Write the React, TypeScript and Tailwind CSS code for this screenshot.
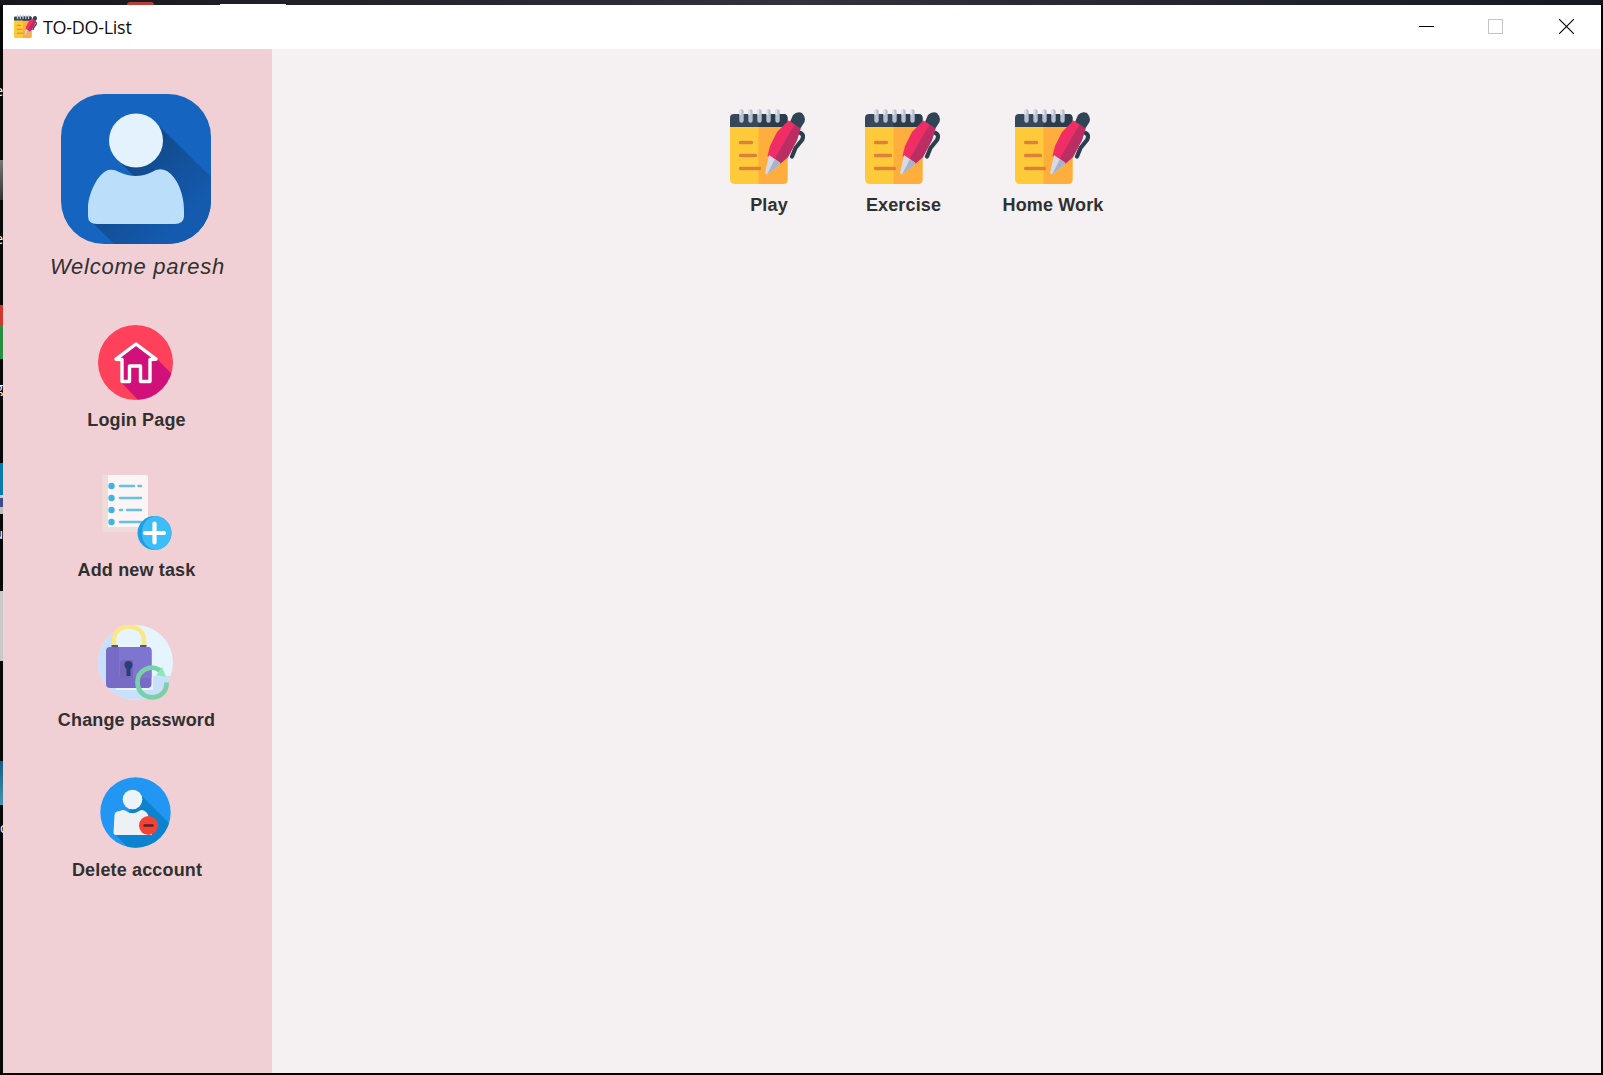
import React from "react";

function NotebookIcon({ className }: { className: string }) {
  return (
    <svg className={className} viewBox="0 0 75 75">
      <path d="M0 17H57.500V71Q57.500 75 53 75H5Q0 75 0 70Z" fill="#ffca3a" />
      <path d="M28.500 17H57.500V70Q57.500 75 52 75H28.500Z" fill="#ffad3d" />
      <path d="M0 18V9Q0 5 4 5H53Q57.500 5 57.500 9V18Z" fill="#35495a" />
      <path d="M28.500 5H53Q57.500 5 57.500 9V18H28.500Z" fill="#2b3c4b" />
      <g stroke="#b9c0d3" strokeWidth="4.400" strokeLinecap="round">
        <path d="M11.500 2.500V11.500M20.500 2.500V11.500M29.500 2.500V11.500M38.500 2.500V11.500M47.500 2.500V11.500" />
      </g>
      <g stroke="#e3e4ec" strokeWidth="2" strokeLinecap="round">
        <path d="M10.300 1.500V5M19.300 1.500V5M28.300 1.500V5M37.300 1.500V5M46.300 1.500V5" />
      </g>
      <g stroke="#d98238" strokeWidth="3.400" strokeLinecap="round">
        <path d="M10.500 33.500H21.500M10.500 46.500H25.500M10.500 59.500H29.500" />
      </g>
      <path d="M69 23.500Q75 25 72 31L65.500 39L62 47.500" fill="none" stroke="#2b3e4e" strokeWidth="4.200" strokeLinecap="round" strokeLinejoin="round" />
      <path d="M60 13L63 6Q67 2 72 4Q76 8 74.500 13L70 20Z" fill="#2f4455" />
      <path d="M58.500 11.500L70.500 19.500L67 31L58 48L50 55L37.500 47L40 37L47 23Z" fill="#f02e65" />
      <path d="M64.500 15.500L70.500 19.500L67 31L58 48L50 55L44 51Z" fill="#bb2e63" />
      <path d="M39 46L50.500 54L47 58L37 65.500L35 64Z" fill="#d7dae4" />
      <path d="M45 50L50.500 54L47 58L37 65.500Z" fill="#a9b2c9" />
    </svg>
  );
}

function AvatarIcon() {
  return (
    <svg className="size-[150px]" viewBox="0 0 150 150">
      <defs>
        <clipPath id="avatar-clip"><rect width="150" height="150" rx="43" /></clipPath>
        <linearGradient id="avatar-shade" gradientUnits="userSpaceOnUse" x1="75" y1="60" x2="135" y2="120">
          <stop offset="0" stopColor="#124a8b" />
          <stop offset="1" stopColor="#145bb0" />
        </linearGradient>
      </defs>
      <g clipPath="url(#avatar-clip)">
        <rect width="150" height="150" fill="#1565c0" />
        <path d="M96 30L150 83V150H53L31 128L90 100L55 64Z" fill="url(#avatar-shade)" />
        <path d="M47 76Q53 75 58 78Q75 86 91 78Q98 73 106 77C117 84 123 101 123 116V123Q122 130 114 130H36Q27 130 27 122V114C27 101 36 80 47 76Z" fill="#bbdefb" />
        <circle cx="75" cy="46.500" r="27" fill="#e3f2fd" />
      </g>
    </svg>
  );
}

function HomeIcon() {
  return (
    <svg className="mr-px size-[75px]" viewBox="0 0 75 75">
      <defs><clipPath id="home-clip"><circle cx="37.500" cy="37.500" r="37.500" /></clipPath></defs>
      <g clipPath="url(#home-clip)">
        <rect width="75" height="75" fill="#ff415b" />
        <path d="M38 19L57 32L82 57V75H40L23 57L23 36L18 35Z" fill="#d1107a" />
      </g>
      <path d="M38 19L18 34.200L24 34.500V56.500H31.500V41H42.500V56.500H52V34.500L58 34.200Z" fill="none" stroke="#fff" strokeWidth="3.400" strokeLinejoin="round" />
    </svg>
  );
}

function AddTaskIcon() {
  return (
    <svg className="mr-px size-[75px]" viewBox="0 0 75 75">
      <path d="M4 0H49V57H6Q4 57 4 55Z" fill="#efdcd9" />
      <path d="M10 0H48Q50 0 50 2V52H10Z" fill="#fbf5f5" />
      <g fill="#3fb6e2">
        <circle cx="13.500" cy="11" r="3.200" />
        <circle cx="13.500" cy="23" r="3.200" />
        <circle cx="13.500" cy="35" r="3.200" />
        <circle cx="13.500" cy="47" r="3.200" />
      </g>
      <path d="M22 11H36M40.500 11H43M22 23H43M22 35H24M29 35H43M22 47H43" stroke="#68c0e5" strokeWidth="2.600" strokeLinecap="round" />
      <circle cx="56.500" cy="58" r="17" fill="#1b9fe6" />
      <path d="M56.500 41A17 17 0 0 1 56.500 75Q44 71 44 58Q44 45 56.500 41Z" fill="#3dbdf8" />
      <path d="M56.500 48.500V67.500M47 58H66" stroke="#fff" strokeWidth="4.200" strokeLinecap="round" />
    </svg>
  );
}

function PasswordIcon() {
  return (
    <svg className="mr-px size-[75px]" viewBox="0 0 75 75">
      <defs><clipPath id="lock-clip"><circle cx="37.500" cy="37.500" r="37.500" /></clipPath></defs>
      <g clipPath="url(#lock-clip)">
        <rect width="75" height="75" fill="#e5f4fd" />
        <path d="M0 8L18 5V65H55V51H75V75H0Z" fill="#c9e0fa" />
      </g>
      <path d="M16 22V15C16 -3 46 -3 46 15V22" fill="none" stroke="#fae788" strokeWidth="4.400" />
      <path d="M13.500 20H20V25H13.500ZM42 20H48.500V25H42Z" fill="#545582" />
      <rect x="8" y="22" width="45.500" height="41" rx="4" fill="#776bc5" />
      <path d="M21 22H50Q53.500 22 53.500 26V53H25Q21 53 21 49Z" fill="#7e75d1" />
      <path d="M22 39Q22 35 26 35H35V53H25Q22 53 22 50Z" fill="#7767b9" />
      <circle cx="30.500" cy="40" r="4" fill="#293d76" />
      <path d="M28.500 40H32.500V51H28.500Z" fill="#293d76" />
      <path d="M62 45.500C52 38.500 39.500 46 39.500 57C39.500 67 47 72.500 55 72.300C63 72 69 66 68.500 57.500" fill="none" stroke="#79d1a9" strokeWidth="4.800" />
      <path d="M64 42L68 51.500L58 50.500Z" fill="#8de9b3" />
    </svg>
  );
}

function DeleteIcon() {
  return (
    <svg className="mr-px size-[75px]" viewBox="0 0 75 75">
      <defs><clipPath id="delete-clip"><circle cx="37.500" cy="37.500" r="35.200" /></clipPath></defs>
      <g clipPath="url(#delete-clip)">
        <rect width="75" height="75" fill="#2196f3" />
        <path d="M41 18L75 52V75H32L18 60Z" fill="#0d83cf" />
      </g>
      <path d="M22 36Q25 34 28 36Q34.500 40.500 41 36Q45 33.500 49 38L54 48V60H18Q15.500 60 15.500 58L16.500 40Q17 36 22 36Z" fill="#edf1f4" />
      <circle cx="34.500" cy="24.500" r="9.800" fill="#edf3f8" />
      <circle cx="50.500" cy="50.500" r="9.500" fill="#f44336" />
      <path d="M46.500 50.500H54.500" stroke="#5b2028" strokeWidth="2.400" strokeLinecap="round" />
    </svg>
  );
}

const actions = [
  { label: "Login Page", icon: <HomeIcon />, shift: "pl-px" },
  { label: "Add new task", icon: <AddTaskIcon />, shift: "pl-px" },
  { label: "Change password", icon: <PasswordIcon />, shift: "pl-px" },
  { label: "Delete account", icon: <DeleteIcon />, shift: "pl-[2px]" },
];

const tasks = [
  { label: "Play", box: "ml-[730px]", shift: "pl-[3px]" },
  { label: "Exercise", box: "ml-[60px]", shift: "pl-[2px]" },
  { label: "Home Work", box: "ml-[75px]", shift: "pl-px" },
];

function DesktopEdge() {
  const letter = "h-4 overflow-hidden text-right text-[14px] leading-4 text-white";
  return (
    <div className="flex w-[3px] shrink-0 flex-col overflow-hidden bg-[#080808] font-['Open_Sans',sans-serif] [&>*]:shrink-0">
      <div className="h-[78px]" />
      <div className={letter}><span className="float-right">e</span></div>
      <div className="h-[61px]" />
      <div className="h-10 bg-gradient-to-b from-[#777] to-[#333]" />
      <div className="h-[31px]" />
      <div className={letter}><span className="float-right">e</span></div>
      <div className="h-[58px]" />
      <div className="h-5 bg-[#cf382d]" />
      <div className="h-[34px] bg-[#298f40]" />
      <div className="h-[21px]" />
      <div className={letter}><span className="float-right">g</span></div>
      <div className="h-[67px]" />
      <div className="h-8 bg-[#087aae]" />
      <div className="h-[3px] bg-[#c9c9cc]" />
      <div className="h-[9px] bg-[#3e4b89]" />
      <div className="h-[7px] bg-[#bdbdbd]" />
      <div className="h-3" />
      <div className={letter}><span className="float-right">u</span></div>
      <div className="h-[49px]" />
      <div className="h-[70px] bg-[#c9c9c9]" />
      <div className="h-[100px]" />
      <div className="h-[44px] bg-gradient-to-b from-[#155c80] to-[#4795b0]" />
      <div className="h-[15px]" />
      <div className={letter}><span className="float-left">o</span></div>
    </div>
  );
}

export default function App() {
  return (
    <div className="flex h-[1075px] w-[1603px] flex-col overflow-hidden bg-[#020203] font-['Liberation_Sans',Arial,sans-serif] text-[#303030]">
      <div className="flex h-[5px] shrink-0 items-end bg-gradient-to-r from-[#17171c] via-[#34323c] to-[#15191f]">
        <div className="ml-[127px] h-[3px] w-[27px] rounded-t-full bg-[#b83e37]" />
        <div className="ml-[66px] h-px w-[66px] bg-white" />
      </div>
      <div className="flex h-[1068px]">
        <DesktopEdge />
        <div className="flex w-[1598px] flex-col">
          <header className="flex h-11 shrink-0 items-center bg-white">
            <NotebookIcon className="mb-px ml-[11px] size-[23px]" />
            <span className="ml-[6px] w-[200px] font-['Open_Sans',sans-serif] text-[18px] leading-6 tracking-[-0.3px] text-[#111]">TO-DO-List</span>
            <div className="ml-auto flex items-center pr-[27px] pb-px">
              <svg className="mr-[54px] size-[15px]" viewBox="0 0 15 15"><path d="M0 7.500H15" stroke="#000" /></svg>
              <svg className="mr-14 size-[15px]" viewBox="0 0 15 15"><rect x=".5" y=".5" width="14" height="14" fill="none" stroke="#c4c4c4" /></svg>
              <svg className="size-[15px]" viewBox="0 0 15 15"><path d="M0 0L15 15M15 0L0 15" stroke="#000" strokeWidth="1.100" /></svg>
            </div>
          </header>
          <div className="flex flex-1">
            <aside className="flex w-[269px] flex-col items-center bg-[#f1d0d5] pt-[45px] pr-[3px]">
              <AvatarIcon />
              <p className="mt-[9px] h-7 pl-[3px] text-[22px] leading-7 tracking-[0.75px] whitespace-nowrap italic">Welcome paresh</p>
              <nav className="mt-11 flex w-[156px] flex-col">
                {actions.map((a) => (
                  <div key={a.label} className="flex h-[150px] flex-col items-center">
                    {a.icon}
                    <span className={`mt-2 text-[18px] leading-6 font-bold tracking-[0.15px] whitespace-nowrap ${a.shift}`}>{a.label}</span>
                  </div>
                ))}
              </nav>
            </aside>
            <main className="flex flex-1 items-start bg-[#f5f0f1] pt-[60px]">
              <div className="-ml-[272px] flex">
                {tasks.map((t) => (
                  <div key={t.label} className={`flex w-[75px] flex-col items-center ${t.box}`}>
                    <NotebookIcon className="size-[75px]" />
                    <span className={`mt-[9px] text-[18px] leading-6 font-bold tracking-[0.15px] whitespace-nowrap ${t.shift}`}>{t.label}</span>
                  </div>
                ))}
              </div>
            </main>
          </div>
        </div>
      </div>
    </div>
  );
}
